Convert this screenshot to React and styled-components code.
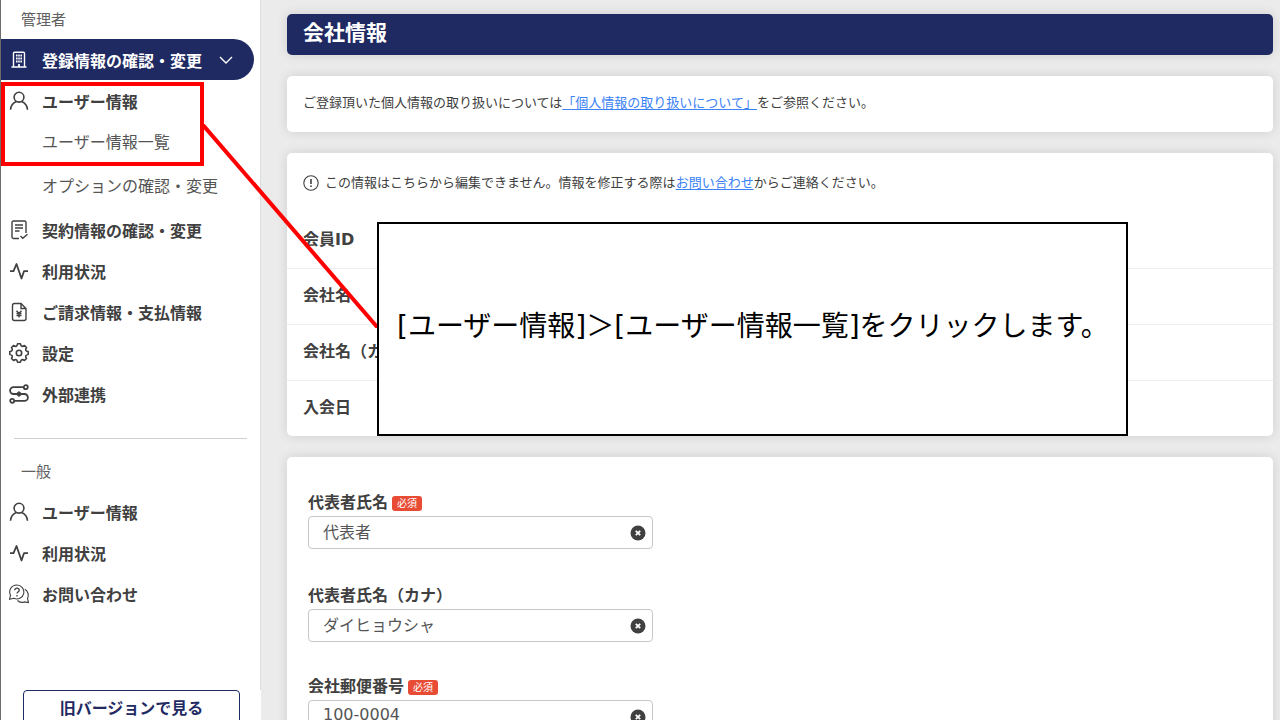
import { useState } from "react"
import styled, { createGlobalStyle, css } from "styled-components"

//Icons for the side menu
const BuildingIcon = () => (
  <Icon viewBox="0 0 20 20" aria-hidden="true">
    <path d="M4.500 17V3.200c0-.6.4-1 1-1h9c.6 0 1 .4 1 1V17M2.500 17h15" />
    <path
      d="M7 5.500h1.600M9.200 5.500h1.600M11.400 5.500H13M7 8.500h1.600M9.200 8.500h1.600M11.400 8.500H13M7 11.500h1.600M9.200 11.500h1.600M11.400 11.500H13M10 14v3"
      strokeWidth="1.800"
    />
  </Icon>
)

const UserIcon = () => (
  <Icon viewBox="0 0 20 20" aria-hidden="true">
    <circle cx="10" cy="6.200" r="4.900" strokeWidth="1.600" />
    <path
      d="M1.500 18.800c.3-4.400 2.600-7 5.800-8.300M18.500 18.800c-.3-4.400-2.600-7-5.800-8.300"
      strokeWidth="1.600"
    />
  </Icon>
)

const ContractIcon = () => (
  <Icon viewBox="0 0 20 20" aria-hidden="true">
    <path d="M10 18.500H4.500c-.8 0-1.500-.6-1.500-1.400V2.500C3 1.700 3.600 1 4.500 1h11c.8 0 1.500.7 1.500 1.500V13" />
    <path d="M6 5h8M6 8h8M6 11h4.500" />
    <path d="M11.500 16l2.200 2.200 4.800-4" />
  </Icon>
)

const ActivityIcon = () => (
  <Icon viewBox="0 0 20 20" aria-hidden="true">
    <path d="M1 10.200h3.500L7.500 3l5 14.500 2.500-7.300h4" strokeWidth="1.800" strokeLinejoin="round" />
  </Icon>
)

const InvoiceIcon = () => (
  <Icon viewBox="0 0 20 20" aria-hidden="true">
    <path d="M12 1.500H5.500c-1.100 0-2 .9-2 2v13c0 1.100.9 2 2 2h9.500c1.100 0 2-.9 2-2v-10zM12 1.500v5h5" />
    <path d="M7.500 8.800L10 11.500l2.500-2.700M10 11.500V15.500M7.500 11.500h5M7.500 13.500h5" />
  </Icon>
)

const gearPoint = (radius, degrees) => {
  const angle = (degrees * Math.PI) / 180
  return `${10 + radius * Math.cos(angle)} ${10 + radius * Math.sin(angle)}`
}

//Eight teeth with a rounded notch between each pair
const gearPath = [0, 45, 90, 135, 180, 225, 270, 315]
  .map(
    (deg, i) =>
      `${i === 0 ? "M" : "L"}${gearPoint(9.3, deg - 9)} L${gearPoint(9.3, deg + 9)} ` +
      `Q${gearPoint(5.6, deg + 22.5)} ${gearPoint(9.3, deg + 36)}`
  )
  .join(" ")

const GearIcon = () => (
  <Icon viewBox="0 0 20 20" aria-hidden="true">
    <circle cx="10" cy="10" r="2.700" strokeWidth="1.600" />
    <path d={`${gearPath}Z`} strokeWidth="1.600" strokeLinejoin="round" />
  </Icon>
)

const LinkageIcon = () => (
  <Icon viewBox="0 0 20 20" aria-hidden="true">
    <g strokeWidth="1.800">
      <circle cx="16.800" cy="3.200" r="2" />
      <circle cx="3.200" cy="16.800" r="2" />
      <path d="M14.800 3.200H4.500a3.300 3.300 0 0 0 0 6.800h11a3.300 3.300 0 0 1 0 6.800H5.200" />
    </g>
    <path d="M10 8l2.500 2-2.500 2-2.500-2z" fill="currentColor" />
  </Icon>
)

const QuestionIcon = () => (
  <Icon viewBox="0 0 20 20" aria-hidden="true">
    <path
      d="M7.800 1a7 7 0 1 1-3 13.300L.6 15.200l.9-4A7 7 0 0 1 7.800 1z"
      strokeWidth="1.100"
    />
    <path d="M15.800 5.200c3.200 1.900 4.300 5.800 2.700 9.200l1 4.100-4.200-.6c-2.500.9-5 .4-6.800-1.400" strokeWidth="1.100" />
    <path d="M5.700 6.300c0-2.900 4.500-2.700 4.500-.1 0 1.700-2.200 1.800-2.200 3.400M8 11v1.400" strokeWidth="1.300" />
  </Icon>
)

const adminItems = [
  { label: "契約情報の確認・変更", icon: ContractIcon },
  { label: "利用状況", icon: ActivityIcon },
  { label: "ご請求情報・支払情報", icon: InvoiceIcon },
  { label: "設定", icon: GearIcon },
  { label: "外部連携", icon: LinkageIcon },
]

const generalItems = [
  { label: "ユーザー情報", icon: UserIcon },
  { label: "利用状況", icon: ActivityIcon },
  { label: "お問い合わせ", icon: QuestionIcon },
]

const companyRows = ["会員ID", "会社名", "会社名（カナ）", "入会日"]

const MenuItem = ({ item }) => (
  <li>
    <MenuLink href="#">
      <item.icon />
      {item.label}
    </MenuLink>
  </li>
)

const Field = ({ id, label, required, initial }) => {
  const [value, setValue] = useState(initial)

  return (
    <FieldDiv>
      <LabelRow>
        <label htmlFor={id}>{label}</label>
        {required && <Required>必須</Required>}
      </LabelRow>
      <InputBox>
        <Input id={id} value={value} onChange={(e) => setValue(e.target.value)} />
        <ClearButton type="button" aria-label="クリア" onClick={() => setValue("")}>
          <svg viewBox="0 0 16 16" width="16" height="16">
            <circle cx="8" cy="8" r="7.500" fill="#404040" />
            <path d="M5.800 5.800l4.400 4.400M10.200 5.800l-4.400 4.400" stroke="#fff" strokeWidth="1.800" />
          </svg>
        </ClearButton>
      </InputBox>
    </FieldDiv>
  )
}

const App = () => (
  <>
    <GlobalStyle />
    <Shell>
      <Sidebar>
        <Menu>
          <MenuHeading>管理者</MenuHeading>
          <MenuList>
            <li>
              <ActiveItem type="button" aria-expanded="true">
                <BuildingIcon />
                登録情報の確認・変更
                <Chevron viewBox="0 0 14 8" aria-hidden="true">
                  <path d="M1 1l6 6 6-6" />
                </Chevron>
              </ActiveItem>
            </li>
            <MenuItem item={generalItems[0]} />
            <li>
              <SubLink href="#">ユーザー情報一覧</SubLink>
            </li>
            <li>
              <SubLink href="#" $tall>
                オプションの確認・変更
              </SubLink>
            </li>
            {adminItems.map((item) => (
              <MenuItem key={item.label} item={item} />
            ))}
          </MenuList>
          <Divider />
          <MenuHeading>一般</MenuHeading>
          <MenuList>
            {generalItems.map((item) => (
              <MenuItem key={item.label} item={item} />
            ))}
          </MenuList>
        </Menu>
        <SidebarFooter>
          <OldVersionButton type="button">旧バージョンで見る</OldVersionButton>
        </SidebarFooter>
      </Sidebar>

      <Main>
        <TitleBar>会社情報</TitleBar>
        <Card>
          <Note>
            ご登録頂いた個人情報の取り扱いについては
            <a href="#">「個人情報の取り扱いについて」</a>
            をご参照ください。
          </Note>
        </Card>
        <Card>
          <InfoNote>
            <NoteIcon viewBox="0 0 16 16" aria-hidden="true">
              <circle cx="8" cy="8" r="7.200" />
              <path d="M8 4v5M8 10.500v1.500" strokeWidth="1.600" />
            </NoteIcon>
            この情報はこちらから編集できません。情報を修正する際は
            <a href="#">お問い合わせ</a>
            からご連絡ください。
          </InfoNote>
          <InfoTable>
            <tbody>
              {companyRows.map((row) => (
                <tr key={row}>
                  <th scope="row">{row}</th>
                  <td />
                </tr>
              ))}
            </tbody>
          </InfoTable>
        </Card>
        <Card>
          <Form>
            <NameGroup>
              <Field id="name" label="代表者氏名" required initial="代表者" />
              <Field id="kana" label="代表者氏名（カナ）" initial="ダイヒョウシャ" />
            </NameGroup>
            <Field id="zip" label="会社郵便番号" required initial="100-0004" />
          </Form>
        </Card>
      </Main>

      {/* Guide drawn on top of the page */}
      <Highlight />
      <Pointer viewBox="0 0 176 204" aria-hidden="true">
        <path d="M1 1l175 203" />
      </Pointer>
      <Callout>[ユーザー情報]＞[ユーザー情報一覧]をクリックします。</Callout>
    </Shell>
  </>
)

export default App

const GlobalStyle = createGlobalStyle`
  * {
    box-sizing: border-box;
  }

  body {
    margin: 0;
    color: #404040;
    font-family: "DejaVu Sans", "Noto Sans CJK JP", sans-serif;
    font-size: 16px;
  }

  button,
  input {
    font: inherit;
    color: inherit;
  }
`

const Shell = styled.div`
  position: relative;
  display: flex;
  height: 100vh;
  overflow: hidden;
  background: #ebebeb;
`

const Sidebar = styled.aside`
  display: flex;
  flex-direction: column;
  flex: 0 0 261px;
  background: #ffffff;
  border-left: 1px solid #6b6b6b;
`

const Menu = styled.nav`
  flex: 1;
  border-right: 1px solid #dcdcdc;
`

const MenuHeading = styled.h2`
  margin: 0;
  padding: 2px 20px 0;
  font-size: 15px;
  font-weight: 400;
  line-height: 37px;
  color: #606060;
`

const MenuList = styled.ul`
  margin: 0;
  padding: 0;
  list-style: none;
`

const menuRow = css`
  display: flex;
  align-items: center;
  gap: 13px;
  height: 41px;
  padding: 0 8px;
  font-weight: 700;
  white-space: nowrap;
`

const MenuLink = styled.a`
  ${menuRow}
  color: #404040;
  text-decoration: none;
`

const ActiveItem = styled.button`
  ${menuRow}
  width: calc(100% - 6px);
  border: none;
  border-radius: 0 21px 21px 0;
  background: #1f2a63;
  color: #ffffff;
  cursor: pointer;
`

const SubLink = styled.a`
  display: flex;
  align-items: center;
  height: ${({ $tall }) => ($tall ? "48px" : "40px")};
  padding-left: 41px;
  color: #555555;
  text-decoration: none;
`

const Icon = styled.svg`
  flex: none;
  width: 20px;
  height: 20px;
  fill: none;
  stroke: currentColor;
  stroke-width: 1.4;
`

const Chevron = styled.svg`
  width: 14px;
  height: 8px;
  margin-left: 4px;
  fill: none;
  stroke: currentColor;
  stroke-width: 1.4;
`

const Divider = styled.hr`
  margin: 24px 13px 13px;
  border: none;
  border-top: 1px solid #d0d0d0;
`

const SidebarFooter = styled.div`
  height: 30px;
  padding: 0 21px 0 22px;
`

const OldVersionButton = styled.button`
  width: 100%;
  height: 38px;
  padding: 0;
  border: 1px solid #1f2a63;
  border-radius: 4px;
  background: #ffffff;
  color: #1f2a63;
  font-weight: 700;
  line-height: 32px;
  cursor: pointer;
`

const Main = styled.main`
  flex: 1;
  min-width: 0;
  padding: 14px 7px 0 26px;
`

const TitleBar = styled.h1`
  margin: 0 0 21px;
  padding: 0 16px 2px;
  border-radius: 5px;
  background: #1f2a63;
  box-shadow: 0 0 12px rgba(0, 0, 0, 0.12);
  color: #ffffff;
  font-size: 21px;
  line-height: 39px;
`

const Card = styled.section`
  margin-bottom: 21px;
  border-radius: 5px;
  background: #ffffff;
  box-shadow: 0 0 12px rgba(0, 0, 0, 0.12);
`

const Note = styled.p`
  display: flex;
  align-items: center;
  margin: 0;
  padding: 17px 16px 19px;
  font-size: 13px;
  line-height: 20px;

  a {
    color: #3b82f6;
    text-underline-offset: 2px;
  }
`

const InfoNote = styled(Note)`
  padding-top: 20px;
`

const NoteIcon = styled.svg`
  width: 16px;
  height: 16px;
  margin-right: 6px;
  fill: none;
  stroke: currentColor;
  stroke-width: 1.1;
`

const InfoTable = styled.table`
  width: 100%;
  border-collapse: collapse;

  th {
    height: 56px;
    padding: 0 16px;
    line-height: 20px;
    text-align: left;
  }

  tr + tr {
    border-top: 1px solid #eeeeee;
  }
`

const Form = styled.form`
  display: flex;
  flex-direction: column;
  gap: 32px;
  padding: 33px 21px;
`

const NameGroup = styled.div`
  display: flex;
  flex-direction: column;
  gap: 34px;
`

const FieldDiv = styled.div`
  max-width: 345px;
`

const LabelRow = styled.div`
  display: flex;
  align-items: center;
  gap: 4px;
  height: 26px;
  font-weight: 700;
  line-height: 20px;
`

const Required = styled.span`
  padding: 0 5px;
  border-radius: 3px;
  background: #e84c35;
  color: #ffffff;
  font-size: 10px;
  font-weight: 400;
  line-height: 15px;
`

const InputBox = styled.div`
  display: flex;
  align-items: center;
  height: 33px;
  padding: 0 6px 0 14px;
  border: 1px solid #c8c8cc;
  border-radius: 4px;
`

const Input = styled.input`
  flex: 1;
  min-width: 0;
  padding: 0 0 4px;
  border: none;
  outline: none;
  background: none;
  color: #555555;
`

const ClearButton = styled.button`
  display: flex;
  padding: 0;
  border: none;
  background: none;
  cursor: pointer;
`

const Highlight = styled.div`
  position: absolute;
  left: 1px;
  top: 82px;
  width: 203px;
  height: 84px;
  border: 4px solid #ff0000;
`

const Pointer = styled.svg`
  position: absolute;
  left: 202px;
  top: 124px;
  width: 176px;
  height: 204px;
  fill: none;
  stroke: #ff0000;
  stroke-width: 4;
`

const Callout = styled.div`
  position: absolute;
  left: 377px;
  top: 222px;
  display: flex;
  align-items: center;
  width: 751px;
  height: 214px;
  padding: 0 18px 10px;
  border: 2px solid #000000;
  background: #ffffff;
  color: #000000;
  font-size: 28px;
  white-space: nowrap;
`
